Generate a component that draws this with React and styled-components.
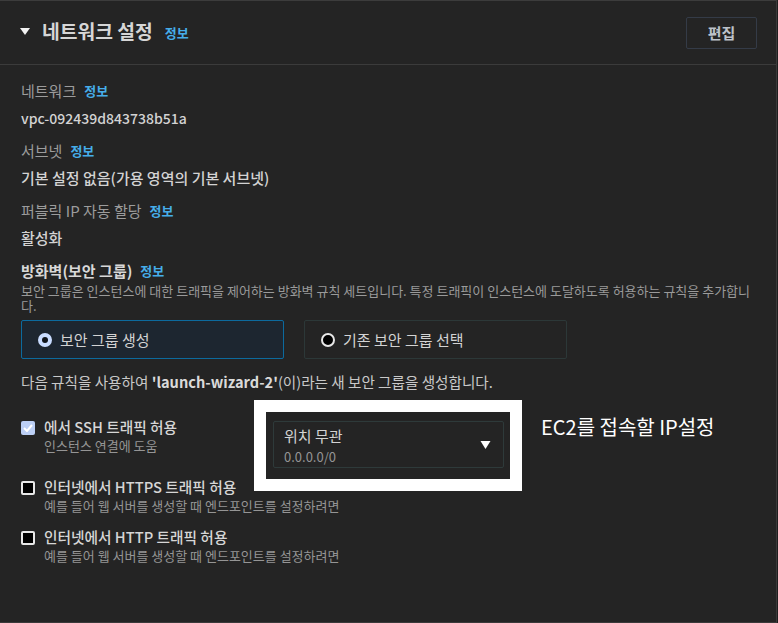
import React from 'react';
import styled, {createGlobalStyle} from 'styled-components';

const GlobalStyle = createGlobalStyle`
  html, body {
    margin: 0;
    padding: 0;
    background: #1f1f1f;
  }
  body {
    font-family: "Noto Sans CJK KR", "Noto Sans", sans-serif;
    color: #d1d1d1;
  }
`

const Panel = styled.section`
  width: 776px;
  height: 621px;
  background: #242424;
  border-top: 1px solid #3c3c3c;
  border-right: 1px solid #3a3a3a;
  border-bottom: 1px solid #3a3a3a;
  display: flex;
  flex-direction: column;
`

const Header = styled.div`
  height: 63px;
  padding: 0 19px 0 20px;
  display: flex;
  align-items: center;
  border-bottom: 1px solid #3b3b3b;
`

const Caret = styled.svg`
  width: 10px;
  height: 8px;
  margin-right: 12px;
  margin-top: -2px;
`

const Title = styled.h2`
  margin: 0;
  font-size: 19.3px;
  font-weight: 700;
  color: #d6d6d6;
  line-height: 24px;
  margin-top: -3px;
`

const Info = styled.a`
  font-size: 13px;
  font-weight: 700;
  color: #46aeea;
  margin-left: ${p => p.$gap || 8}px;
  text-decoration: none;
`

const EditButton = styled.button`
  margin-left: auto;
  width: 71px;
  height: 32px;
  background: transparent;
  border: 1px solid #343b47;
  border-radius: 2px;
  color: #bcc2ca;
  font-family: inherit;
  font-size: 15px;
  font-weight: 700;
`

const Body = styled.div`
  padding: 16px 20px 0 21px;
  display: flex;
  flex-direction: column;
`

const Field = styled.div`
  display: flex;
  flex-direction: column;
  gap: 7px;
  margin-bottom: 13px;
`

const Label = styled.div`
  font-size: 15px;
  line-height: 20px;
  color: ${p => p.$strong ? '#d8d8d8' : '#9c9c9c'};
  font-weight: ${p => p.$strong ? 700 : 400};
  display: flex;
  align-items: center;
`

const Value = styled.div`
  font-size: ${p => p.$size || 15}px;
  line-height: 20px;
  color: #d3d3d3;
  font-weight: 500;
`

const Description = styled.p`
  margin: 2px 0 0;
  max-width: 735px;
  font-size: 13px;
  line-height: 15px;
  color: #9a9a9a;
`

const Tiles = styled.div`
  display: flex;
  gap: 20px;
  margin-top: 7px;
`

const Tile = styled.label`
  box-sizing: border-box;
  width: 263px;
  height: 39px;
  display: flex;
  align-items: center;
  padding-left: 16px;
  gap: 8px;
  border: 1px solid ${p => p.$active ? '#0c6a9e' : '#2c3838'};
  background: ${p => p.$active ? '#1d2630' : 'transparent'};
  border-radius: 2px;
  font-size: 15px;
  color: #d3d3d3;
`

const Radio = styled.span`
  box-sizing: border-box;
  width: 14px;
  height: 14px;
  border-radius: 50%;
  background: ${p => p.$checked ? '#c9dcff' : '#000'};
  border: ${p => p.$checked ? '4px solid #c9dcff' : '2px solid #e8e8e8'};
  position: relative;
  &::after {
    content: '';
    display: ${p => p.$checked ? 'block' : 'none'};
    position: absolute;
    inset: 0;
    border-radius: 50%;
    background: #0f141a;
  }
`

const RuleNote = styled.p`
  margin: 13px 0 0;
  font-size: 14.6px;
  line-height: 20px;
  color: #c9c9c9;
  b {
    color: #dadada;
  }
`

const Rules = styled.div`
  display: flex;
  flex-direction: column;
  gap: 12px;
  margin-top: 25px;
`

const RuleRow = styled.div`
  display: flex;
  align-items: flex-start;
`

const Check = styled.span`
  box-sizing: border-box;
  flex: none;
  width: 14px;
  height: 14px;
  margin: 4px 9px 0 0;
  border-radius: 2px;
  background: ${p => p.$checked ? '#bccff5' : '#000'};
  border: ${p => p.$checked ? 'none' : '2px solid #e8e8e8'};
  display: flex;
  align-items: center;
  justify-content: center;
`

const RuleText = styled.div`
  display: flex;
  flex-direction: column;
  width: ${p => p.$width || 'auto'};
`

const RuleTitle = styled.div`
  font-size: 14.7px;
  line-height: 20px;
  color: #d6d6d6;
  font-weight: 500;
`

const RuleSub = styled.div`
  font-size: 13px;
  line-height: 18px;
  color: #959595;
`

const SelectWrap = styled.div`
  position: relative;
  margin: 4px 0 -3px 19px;
`

const Select = styled.div`
  box-sizing: border-box;
  width: 231px;
  height: 47px;
  border: 1px solid #2e3a3a;
  border-radius: 2px;
  padding: 1px 12px 0 10px;
  display: flex;
  align-items: center;
`

const SelectText = styled.div`
  display: flex;
  flex-direction: column;
  flex: 1;
`

const SelectMain = styled.span`
  font-size: 15px;
  line-height: 22px;
  color: #d3d3d3;
`

const SelectSub = styled.span`
  font-size: 13px;
  line-height: 19px;
  color: #959595;
`

// annotation frame drawn over the screenshot
const Frame = styled.div`
  position: absolute;
  left: -19px;
  top: -21px;
  right: -18px;
  bottom: -23px;
  border: 12px solid #fff;
  pointer-events: none;
`

const Note = styled.div`
  position: absolute;
  left: 268px;
  top: -8px;
  white-space: nowrap;
  font-size: 20px;
  line-height: 28px;
  color: #fff;
`

const TriangleDown = ({w = 10, h = 8, color = '#fff'}) => (
    <svg width={w} height={h} viewBox="0 0 10 8">
        <polygon points="0,0 10,0 5,8" fill={color}/>
    </svg>
)

const App = () => {
    return (
        <>
            <GlobalStyle/>
            <Panel>
                <Header>
                    <Caret viewBox="0 0 10 8"><polygon points="0,0 10,0 5,7" fill="#f2f2f2"/></Caret>
                    <Title>네트워크 설정</Title>
                    <Info $gap={12}>정보</Info>
                    <EditButton>편집</EditButton>
                </Header>
                <Body>
                    <Field>
                        <Label>네트워크<Info>정보</Info></Label>
                        <Value $size={14}>vpc-092439d843738b51a</Value>
                    </Field>
                    <Field>
                        <Label>서브넷<Info>정보</Info></Label>
                        <Value>기본 설정 없음(가용 영역의 기본 서브넷)</Value>
                    </Field>
                    <Field>
                        <Label>퍼블릭 IP 자동 할당<Info>정보</Info></Label>
                        <Value>활성화</Value>
                    </Field>
                    <Label $strong>방화벽(보안 그룹)<Info>정보</Info></Label>
                    <Description>
                        보안 그룹은 인스턴스에 대한 트래픽을 제어하는 방화벽 규칙 세트입니다. 특정 트래픽이 인스턴스에 도달하도록 허용하는 규칙을 추가합니다.
                    </Description>
                    <Tiles>
                        <Tile $active><Radio $checked/>보안 그룹 생성</Tile>
                        <Tile><Radio/>기존 보안 그룹 선택</Tile>
                    </Tiles>
                    <RuleNote>
                        다음 규칙을 사용하여 <b>'launch-wizard-2'</b>(이)라는 새 보안 그룹을 생성합니다.
                    </RuleNote>
                    <Rules>
                        <RuleRow>
                            <Check $checked>
                                <svg width="10" height="8" viewBox="0 0 10 8">
                                    <polyline points="1,4 4,7 9,1" fill="none" stroke="#fff" strokeWidth="2"/>
                                </svg>
                            </Check>
                            <RuleText $width="210px">
                                <RuleTitle>에서 SSH 트래픽 허용</RuleTitle>
                                <RuleSub>인스턴스 연결에 도움</RuleSub>
                            </RuleText>
                            <SelectWrap>
                                <Select>
                                    <SelectText>
                                        <SelectMain>위치 무관</SelectMain>
                                        <SelectSub>0.0.0.0/0</SelectSub>
                                    </SelectText>
                                    <TriangleDown w={11} h={8}/>
                                </Select>
                                <Frame/>
                                <Note>EC2를 접속할 IP설정</Note>
                            </SelectWrap>
                        </RuleRow>
                        <RuleRow>
                            <Check/>
                            <RuleText>
                                <RuleTitle>인터넷에서 HTTPS 트래픽 허용</RuleTitle>
                                <RuleSub>예를 들어 웹 서버를 생성할 때 엔드포인트를 설정하려면</RuleSub>
                            </RuleText>
                        </RuleRow>
                        <RuleRow>
                            <Check/>
                            <RuleText>
                                <RuleTitle>인터넷에서 HTTP 트래픽 허용</RuleTitle>
                                <RuleSub>예를 들어 웹 서버를 생성할 때 엔드포인트를 설정하려면</RuleSub>
                            </RuleText>
                        </RuleRow>
                    </Rules>
                </Body>
            </Panel>
        </>
    )
}

export default App;
